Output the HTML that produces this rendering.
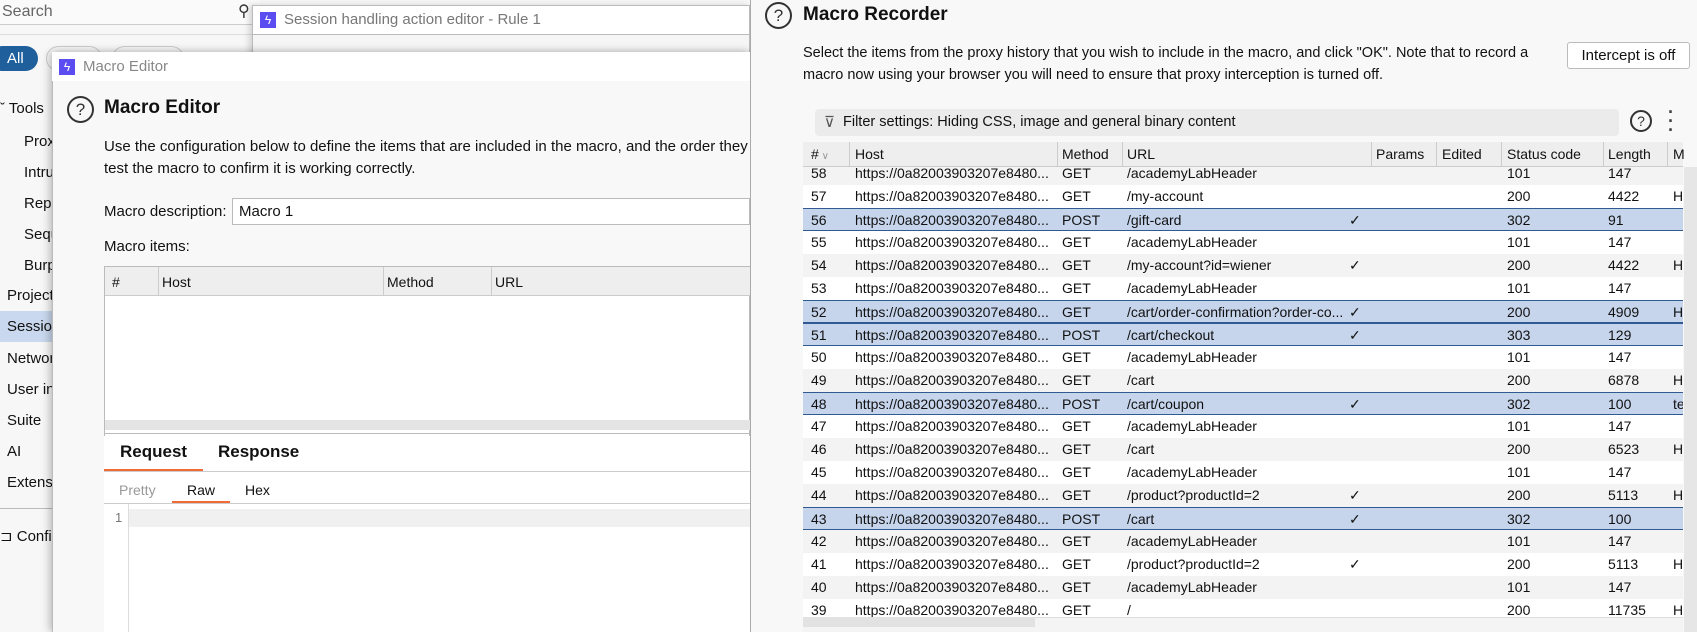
<!DOCTYPE html>
<html><head><meta charset="utf-8">
<style>
*{box-sizing:border-box;margin:0;padding:0}
html,body{width:1697px;height:632px;overflow:hidden}
body{background:#f7f7f7;font-family:"Liberation Sans",sans-serif;color:#111;position:relative;font-size:14px}
.a{position:absolute;white-space:nowrap}
.help{position:absolute;border:2px solid #333;border-radius:50%;text-align:center;color:#333}
.logo{position:absolute;width:16px;height:16px;background:#5b4df0;color:#fff;font-size:12px;text-align:center;line-height:16px}
.row{position:absolute;left:803px;width:880px;height:23px;font-size:14px;line-height:23px}
.row span{position:absolute}
.sel{background:#c6d5ec;border-top:1px solid #2f5a92;border-bottom:1px solid #2f5a92}
.g{background:#f3f3f3}.w{background:#fff}
</style></head><body>
<div class="a" style="left:0;top:0;width:260px;height:25px;border-bottom:1px solid #ccc;background:#fafafa"></div>
<div class="a" style="left:2px;top:3px;font-size:16px;color:#666">Search</div>
<div class="a" style="left:238px;top:1px;font-size:16px;color:#333">⚲</div>
<div class="a" style="left:0;top:34px;width:260px;border-top:1px solid #ddd"></div>
<div class="a" style="left:-10px;top:46px;width:48px;height:25px;background:#1f5f9b;border-radius:13px;color:#fff;font-size:15px;line-height:25px;padding-left:17px">All</div>
<div class="a" style="left:46px;top:46px;width:56px;height:25px;border:1px solid #ccc;border-radius:13px"></div>
<div class="a" style="left:112px;top:46px;width:72px;height:25px;border:1px solid #ccc;border-radius:13px"></div>
<div class="a" style="left:0;top:100px;font-size:15px">ˇ Tools</div>
<div class="a" style="left:24px;top:133px;font-size:15px">Proxy</div>
<div class="a" style="left:24px;top:164px;font-size:15px">Intruder</div>
<div class="a" style="left:24px;top:195px;font-size:15px">Repeater</div>
<div class="a" style="left:24px;top:226px;font-size:15px">Sequencer</div>
<div class="a" style="left:24px;top:257px;font-size:15px">Burp</div>
<div class="a" style="left:7px;top:287px;font-size:15px">Project</div>
<div class="a" style="left:0;top:311px;width:60px;height:31px;background:#c9d8ee"></div>
<div class="a" style="left:7px;top:318px;font-size:15px">Session</div>
<div class="a" style="left:7px;top:350px;font-size:15px">Network</div>
<div class="a" style="left:7px;top:381px;font-size:15px">User interface</div>
<div class="a" style="left:7px;top:412px;font-size:15px">Suite</div>
<div class="a" style="left:7px;top:443px;font-size:15px">AI</div>
<div class="a" style="left:7px;top:474px;font-size:15px">Extensions</div>
<div class="a" style="left:0;top:508px;width:60px;border-top:1px solid #bbb"></div>
<div class="a" style="left:0;top:527px;font-size:15px">⊐ Config</div>

<div class="a" style="left:252px;top:5px;width:498px;height:80px;background:#f5f5f5;border:1px solid #bbb;box-shadow:-3px 0 6px rgba(0,0,0,.15)"></div>
<div class="a" style="left:252px;top:5px;width:498px;height:30px;background:#fff;border:1px solid #bbb"></div>
<div class="logo" style="left:260px;top:12px">ϟ</div>
<div class="a" style="left:284px;top:11px;font-size:15px;color:#777">Session handling action editor - Rule 1</div>

<div class="a" style="left:52px;top:52px;width:698px;height:580px;background:#f8f8f8;border-left:1px solid #bbb;box-shadow:-3px 0 8px rgba(0,0,0,.2),3px 0 8px rgba(0,0,0,.15)"></div>
<div class="a" style="left:52px;top:52px;width:698px;height:29px;background:#fff"></div>
<div class="logo" style="left:59px;top:59px">ϟ</div>
<div class="a" style="left:83px;top:58px;font-size:15px;color:#888">Macro Editor</div>
<div class="help" style="left:67px;top:96px;width:27px;height:27px;font-size:17px;line-height:23px">?</div>
<div class="a" style="left:104px;top:97px;font-size:19px;font-weight:bold">Macro Editor</div>
<div class="a" style="left:104px;top:138px;font-size:15px">Use the configuration below to define the items that are included in the macro, and the order they</div>
<div class="a" style="left:104px;top:160px;font-size:15px">test the macro to confirm it is working correctly.</div>
<div class="a" style="left:104px;top:203px;font-size:15px">Macro description:</div>
<div class="a" style="left:232px;top:198px;width:518px;height:27px;background:#fff;border:1px solid #bbb"></div>
<div class="a" style="left:239px;top:203px;font-size:15px">Macro 1</div>
<div class="a" style="left:104px;top:238px;font-size:15px">Macro items:</div>
<div class="a" style="left:104px;top:266px;width:646px;height:224px;background:#fff;border:1px solid #bbb"></div>
<div class="a" style="left:105px;top:267px;width:645px;height:29px;background:#eee;border-bottom:1px solid #ccc"></div>
<div class="a" style="left:158px;top:267px;height:29px;border-left:1px solid #ccc"></div>
<div class="a" style="left:383px;top:267px;height:29px;border-left:1px solid #ccc"></div>
<div class="a" style="left:491px;top:267px;height:29px;border-left:1px solid #ccc"></div>
<div class="a" style="left:112px;top:274px;font-size:14px">#</div>
<div class="a" style="left:162px;top:274px;font-size:14px">Host</div>
<div class="a" style="left:387px;top:274px;font-size:14px">Method</div>
<div class="a" style="left:495px;top:274px;font-size:14px">URL</div>
<div class="a" style="left:105px;top:420px;width:645px;height:10px;background:#e4e4e4"></div>
<div class="a" style="left:104px;top:433px;width:646px;border-top:1px solid #bbb"></div>
<div class="a" style="left:104px;top:436px;width:646px;height:196px;background:#fff"></div>
<div class="a" style="left:120px;top:442px;font-size:17px;font-weight:bold">Request</div>
<div class="a" style="left:218px;top:442px;font-size:17px;font-weight:bold">Response</div>
<div class="a" style="left:104px;top:469px;width:99px;height:3px;background:#f26a36"></div>
<div class="a" style="left:104px;top:471px;width:646px;border-top:1px solid #ccc"></div>
<div class="a" style="left:119px;top:482px;font-size:14px;color:#999">Pretty</div>
<div class="a" style="left:187px;top:482px;font-size:14px">Raw</div>
<div class="a" style="left:245px;top:482px;font-size:14px">Hex</div>
<div class="a" style="left:172px;top:501px;width:58px;height:2px;background:#f26a36"></div>
<div class="a" style="left:104px;top:503px;width:646px;border-top:1px solid #ccc"></div>
<div class="a" style="left:129px;top:509px;width:621px;height:18px;background:#f0f0f0"></div>
<div class="a" style="left:128px;top:504px;height:128px;border-left:1px solid #ddd"></div>
<div class="a" style="left:115px;top:510px;font-size:13px;color:#777">1</div>

<div class="a" style="left:750px;top:0;width:947px;height:632px;background:#f8f8f8;border-left:1px solid #aaa"></div>
<div class="help" style="left:765px;top:2px;width:27px;height:27px;font-size:17px;line-height:23px">?</div>
<div class="a" style="left:803px;top:4px;font-size:19px;font-weight:bold">Macro Recorder</div>
<div class="a" style="left:803px;top:45px;font-size:14.5px">Select the items from the proxy history that you wish to include in the macro, and click "OK". Note that to record a</div>
<div class="a" style="left:803px;top:67px;font-size:14.5px">macro now using your browser you will need to ensure that proxy interception is turned off.</div>
<div class="a" style="left:1567px;top:42px;width:123px;height:27px;background:#fff;border:1px solid #bbb;border-radius:3px;font-size:15px;text-align:center;line-height:25px">Intercept is off</div>
<div class="a" style="left:815px;top:109px;width:804px;height:27px;background:#ebebeb;border-radius:4px"></div>
<div class="a" style="left:824px;top:113px;font-size:15px;color:#555">⊽</div>
<div class="a" style="left:843px;top:114px;font-size:14.5px">Filter settings: Hiding CSS, image and general binary content</div>
<div class="help" style="left:1630px;top:110px;width:22px;height:22px;font-size:14px;line-height:18px">?</div>
<div class="a" style="left:1668px;top:108px;font-size:18px;font-weight:bold;color:#444;line-height:9px">·<br>·<br>·</div>
<div class="a" style="left:803px;top:142px;width:880px;height:475px;background:#fff"></div>
<div class="a" style="left:803px;top:142px;width:880px;height:25px;background:#eee;border-bottom:1px solid #ccc;font-size:14px;line-height:25px">
<span class="a" style="left:8px">#<span style="color:#999;font-size:10px"> ∨</span></span>
<span class="a" style="left:52px">Host</span><span class="a" style="left:259px">Method</span><span class="a" style="left:324px">URL</span>
<span class="a" style="left:573px">Params</span><span class="a" style="left:639px">Edited</span><span class="a" style="left:704px">Status code</span>
<span class="a" style="left:805px">Length</span><span class="a" style="left:870px">M</span>
<span class="a" style="left:46px;top:0;height:25px;border-left:1px solid #ccc"></span>
<span class="a" style="left:254px;top:0;height:25px;border-left:1px solid #ccc"></span>
<span class="a" style="left:319px;top:0;height:25px;border-left:1px solid #ccc"></span>
<span class="a" style="left:568px;top:0;height:25px;border-left:1px solid #ccc"></span>
<span class="a" style="left:633px;top:0;height:25px;border-left:1px solid #ccc"></span>
<span class="a" style="left:698px;top:0;height:25px;border-left:1px solid #ccc"></span>
<span class="a" style="left:800px;top:0;height:25px;border-left:1px solid #ccc"></span>
<span class="a" style="left:864px;top:0;height:25px;border-left:1px solid #ccc"></span>
</div>
<div class="a" style="left:803px;top:167px;width:880px;height:450px;overflow:hidden">
<div style="position:absolute;left:-803px;top:-167px;width:1697px;height:632px">
<div class="row g" style="top:162px"><span style="left:8px">58</span><span style="left:52px">https://0a82003903207e8480...</span><span style="left:259px">GET</span><span style="left:324px">/academyLabHeader</span><span style="left:704px">101</span><span style="left:805px">147</span></div>
<div class="row w" style="top:185px"><span style="left:8px">57</span><span style="left:52px">https://0a82003903207e8480...</span><span style="left:259px">GET</span><span style="left:324px">/my-account</span><span style="left:704px">200</span><span style="left:805px">4422</span><span style="left:870px">H</span></div>
<div class="row sel" style="top:208px"><span style="left:8px">56</span><span style="left:52px">https://0a82003903207e8480...</span><span style="left:259px">POST</span><span style="left:324px">/gift-card</span><span style="left:546px">✓</span><span style="left:704px">302</span><span style="left:805px">91</span></div>
<div class="row w" style="top:231px"><span style="left:8px">55</span><span style="left:52px">https://0a82003903207e8480...</span><span style="left:259px">GET</span><span style="left:324px">/academyLabHeader</span><span style="left:704px">101</span><span style="left:805px">147</span></div>
<div class="row g" style="top:254px"><span style="left:8px">54</span><span style="left:52px">https://0a82003903207e8480...</span><span style="left:259px">GET</span><span style="left:324px">/my-account?id=wiener</span><span style="left:546px">✓</span><span style="left:704px">200</span><span style="left:805px">4422</span><span style="left:870px">H</span></div>
<div class="row w" style="top:277px"><span style="left:8px">53</span><span style="left:52px">https://0a82003903207e8480...</span><span style="left:259px">GET</span><span style="left:324px">/academyLabHeader</span><span style="left:704px">101</span><span style="left:805px">147</span></div>
<div class="row sel" style="top:300px"><span style="left:8px">52</span><span style="left:52px">https://0a82003903207e8480...</span><span style="left:259px">GET</span><span style="left:324px">/cart/order-confirmation?order-co...</span><span style="left:546px">✓</span><span style="left:704px">200</span><span style="left:805px">4909</span><span style="left:870px">H</span></div>
<div class="row sel" style="top:323px"><span style="left:8px">51</span><span style="left:52px">https://0a82003903207e8480...</span><span style="left:259px">POST</span><span style="left:324px">/cart/checkout</span><span style="left:546px">✓</span><span style="left:704px">303</span><span style="left:805px">129</span></div>
<div class="row w" style="top:346px"><span style="left:8px">50</span><span style="left:52px">https://0a82003903207e8480...</span><span style="left:259px">GET</span><span style="left:324px">/academyLabHeader</span><span style="left:704px">101</span><span style="left:805px">147</span></div>
<div class="row g" style="top:369px"><span style="left:8px">49</span><span style="left:52px">https://0a82003903207e8480...</span><span style="left:259px">GET</span><span style="left:324px">/cart</span><span style="left:704px">200</span><span style="left:805px">6878</span><span style="left:870px">H</span></div>
<div class="row sel" style="top:392px"><span style="left:8px">48</span><span style="left:52px">https://0a82003903207e8480...</span><span style="left:259px">POST</span><span style="left:324px">/cart/coupon</span><span style="left:546px">✓</span><span style="left:704px">302</span><span style="left:805px">100</span><span style="left:870px">te</span></div>
<div class="row w" style="top:415px"><span style="left:8px">47</span><span style="left:52px">https://0a82003903207e8480...</span><span style="left:259px">GET</span><span style="left:324px">/academyLabHeader</span><span style="left:704px">101</span><span style="left:805px">147</span></div>
<div class="row g" style="top:438px"><span style="left:8px">46</span><span style="left:52px">https://0a82003903207e8480...</span><span style="left:259px">GET</span><span style="left:324px">/cart</span><span style="left:704px">200</span><span style="left:805px">6523</span><span style="left:870px">H</span></div>
<div class="row w" style="top:461px"><span style="left:8px">45</span><span style="left:52px">https://0a82003903207e8480...</span><span style="left:259px">GET</span><span style="left:324px">/academyLabHeader</span><span style="left:704px">101</span><span style="left:805px">147</span></div>
<div class="row g" style="top:484px"><span style="left:8px">44</span><span style="left:52px">https://0a82003903207e8480...</span><span style="left:259px">GET</span><span style="left:324px">/product?productId=2</span><span style="left:546px">✓</span><span style="left:704px">200</span><span style="left:805px">5113</span><span style="left:870px">H</span></div>
<div class="row sel" style="top:507px"><span style="left:8px">43</span><span style="left:52px">https://0a82003903207e8480...</span><span style="left:259px">POST</span><span style="left:324px">/cart</span><span style="left:546px">✓</span><span style="left:704px">302</span><span style="left:805px">100</span></div>
<div class="row g" style="top:530px"><span style="left:8px">42</span><span style="left:52px">https://0a82003903207e8480...</span><span style="left:259px">GET</span><span style="left:324px">/academyLabHeader</span><span style="left:704px">101</span><span style="left:805px">147</span></div>
<div class="row w" style="top:553px"><span style="left:8px">41</span><span style="left:52px">https://0a82003903207e8480...</span><span style="left:259px">GET</span><span style="left:324px">/product?productId=2</span><span style="left:546px">✓</span><span style="left:704px">200</span><span style="left:805px">5113</span><span style="left:870px">H</span></div>
<div class="row g" style="top:576px"><span style="left:8px">40</span><span style="left:52px">https://0a82003903207e8480...</span><span style="left:259px">GET</span><span style="left:324px">/academyLabHeader</span><span style="left:704px">101</span><span style="left:805px">147</span></div>
<div class="row w" style="top:599px"><span style="left:8px">39</span><span style="left:52px">https://0a82003903207e8480...</span><span style="left:259px">GET</span><span style="left:324px">/</span><span style="left:704px">200</span><span style="left:805px">11735</span><span style="left:870px">H</span></div>
</div></div>
<div class="a" style="left:1684px;top:167px;width:13px;height:465px;background:#e6e6e6"></div>
<div class="a" style="left:803px;top:617px;width:880px;height:15px;background:#f4f4f4;border-top:1px solid #ddd"></div>
<div class="a" style="left:803px;top:617px;width:232px;height:10px;background:#e2e2e2"></div>
</body></html>
